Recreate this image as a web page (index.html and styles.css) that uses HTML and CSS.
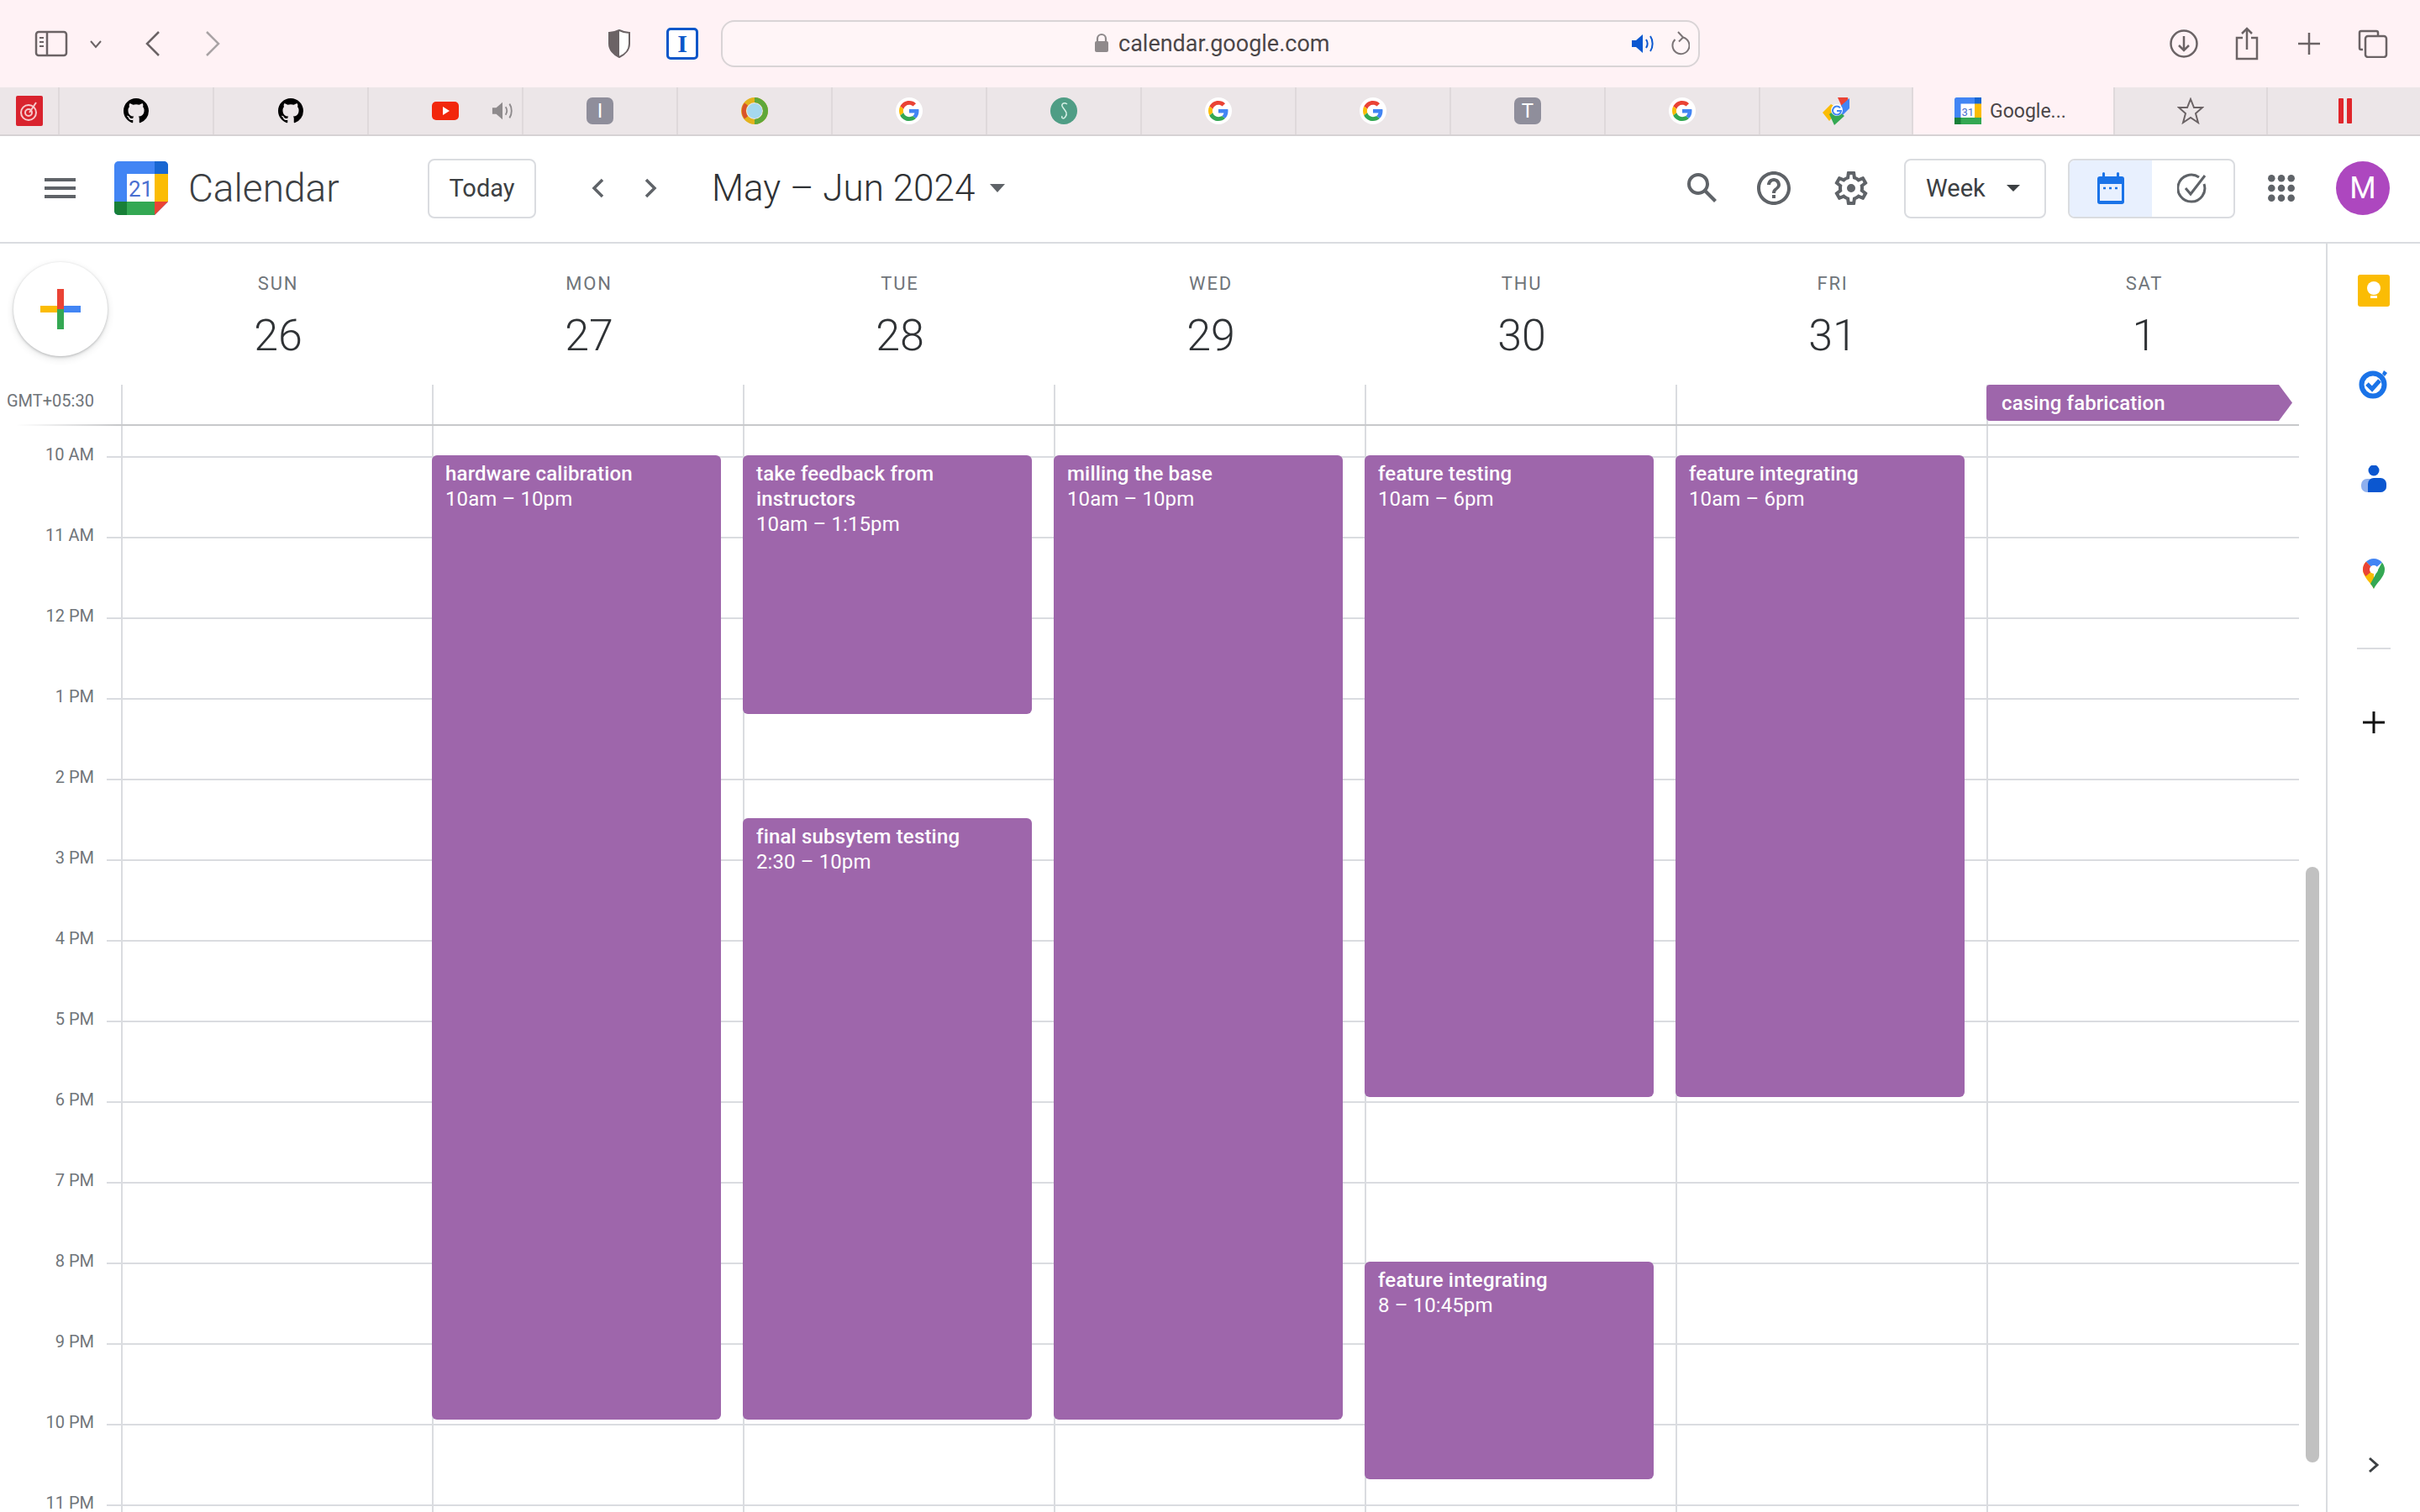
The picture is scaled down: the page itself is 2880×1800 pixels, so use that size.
FILE: index.html
```html
<!DOCTYPE html>
<html>
<head>
  <title>Google Calendar</title>
  <link rel="stylesheet" href="styles.css">
</head>
<body>
  <svg class="defs">
    <symbol id="g" viewBox="-8 -8 64 64">
      <circle cx="24" cy="24" r="32" fill="#fff"/>
      <path fill="#EA4335" d="M24 9.5c3.54 0 6.71 1.22 9.21 3.6l6.85-6.85C35.9 2.38 30.47 0 24 0 14.62 0 6.51 5.38 2.56 13.22l7.98 6.19C12.43 13.72 17.74 9.5 24 9.5z"/>
      <path fill="#4285F4" d="M46.98 24.55c0-1.57-.15-3.09-.38-4.55H24v9.02h12.94c-.58 2.96-2.26 5.48-4.78 7.18l7.73 6c4.51-4.18 7.09-10.36 7.09-17.65z"/>
      <path fill="#FBBC05" d="M10.53 28.59c-.48-1.45-.76-2.99-.76-4.59s.27-3.14.76-4.59l-7.98-6.19C.92 16.46 0 20.12 0 24c0 3.88.92 7.54 2.56 10.78l7.97-6.19z"/>
      <path fill="#34A853" d="M24 48c6.48 0 11.93-2.13 15.89-5.81l-7.73-6c-2.15 1.45-4.92 2.3-8.16 2.3-6.26 0-11.57-4.22-13.47-9.91l-7.98 6.19C6.51 42.62 14.62 48 24 48z"/>
    </symbol>
    <symbol id="github" viewBox="0 0 16 16">
      <path fill-rule="evenodd" fill="#000" d="M8 0C3.58 0 0 3.58 0 8c0 3.54 2.29 6.53 5.47 7.59.4.07.55-.17.55-.38 0-.19-.01-.82-.01-1.49-2.01.37-2.53-.49-2.69-.94-.09-.23-.48-.94-.82-1.13-.28-.15-.68-.52-.01-.53.63-.01 1.08.58 1.23.82.72 1.21 1.87.87 2.33.66.07-.52.28-.87.51-1.07-1.78-.2-3.64-.89-3.64-3.95 0-.87.31-1.59.82-2.15-.08-.2-.36-1.02.08-2.12 0 0 .67-.21 2.2.82.64-.18 1.32-.27 2-.27.68 0 1.36.09 2 .27 1.53-1.04 2.2-.82 2.2-.82.44 1.1.16 1.92.08 2.12.51.56.82 1.27.82 2.15 0 3.07-1.87 3.75-3.65 3.95.29.25.54.73.54 1.48 0 1.07-.01 1.93-.01 2.2 0 .21.15.46.55.38A8.013 8.013 0 0016 8c0-4.42-3.58-8-8-8z"/>
    </symbol>
    <symbol id="speaker" viewBox="0 0 28 28">
      <path d="M1 10h5l8-7v22l-8-7H1z" fill="currentColor"/>
      <path d="M18 9c2 3 2 7 0 10M23 5c3.500 5 3.500 13 0 18" fill="none" stroke="currentColor" stroke-width="2"/>
    </symbol>
  </svg>

  <!-- browser toolbar -->
  <div class="toolbar">
    <svg class="tb-sidebar" width="40" height="32" viewBox="0 0 40 32" fill="none" stroke="#6b6365" stroke-width="2.500">
      <rect x="2" y="2" width="36" height="28" rx="3"/><path d="M15 2v28"/>
      <path d="M6 9h5M6 14h5M6 19h5" stroke-width="2.200"/>
    </svg>
    <svg class="tb-chev" width="14" height="10" viewBox="0 0 14 10" fill="none" stroke="#6b6365" stroke-width="2"><path d="M1 1l6 7 6-7"/></svg>
    <svg class="tb-back" width="20" height="30" viewBox="0 0 20 30" fill="none" stroke="#6b6365" stroke-width="2.500"><path d="M17 1L3 15l14 14"/></svg>
    <svg class="tb-forward" width="20" height="30" viewBox="0 0 20 30" fill="none" stroke="#a9a3a5" stroke-width="2.500"><path d="M3 1l14 14L3 29"/></svg>
    <svg class="tb-shield" width="28" height="34" viewBox="0 0 28 34">
      <path d="M14 1C10 3 6 4 2 4v13c0 7 5 13 12 16 7-3 12-9 12-16V4c-4 0-8-1-12-3z" fill="#fff" stroke="#6b6365" stroke-width="2"/>
      <path d="M14 1C10 3 6 4 2 4v13c0 7 5 13 12 16z" fill="#6b6365"/>
    </svg>
    <div class="tb-ibox">I</div>
    <div class="urlbar">
      <svg class="lock" width="18" height="24" viewBox="0 0 18 24"><path d="M4 10V7a5 5 0 0 1 10 0v3" fill="none" stroke="#8f8a8c" stroke-width="2.200"/><rect x="1" y="10" width="16" height="13" rx="2" fill="#8f8a8c"/></svg>
      <span class="url">calendar.google.com</span>
      <svg class="url-sound" width="28" height="28"><use href="#speaker"/></svg>
      <svg class="url-reload" width="24" height="30" viewBox="0 0 24 30" fill="none" stroke="#7b7476" stroke-width="2"><path d="M16 7.500A10 10 0 1 1 6.500 10"/><path d="M10 1l6 6.500-5 5"/></svg>
    </div>
    <div class="tb-right">
      <svg width="34" height="34" viewBox="0 0 34 34" fill="none" stroke="#6b6365" stroke-width="2.500"><circle cx="17" cy="17" r="15.500"/><path d="M17 8v17M11 19l6 6 6-6"/></svg>
      <svg class="tb-share" width="28" height="40" viewBox="0 0 28 40" fill="none" stroke="#6b6365" stroke-width="2.500"><path d="M9 13H2v25h24V13h-7"/><path d="M14 27V2M8 8l6-6 6 6"/></svg>
      <svg class="tb-plus" width="28" height="28" viewBox="0 0 28 28" fill="none" stroke="#6b6365" stroke-width="2.500"><path d="M14 1v26M1 14h26"/></svg>
      <svg class="tb-tabs" width="36" height="34" viewBox="0 0 36 34" fill="none" stroke="#6b6365" stroke-width="2.500"><path d="M6 24H4a2 2 0 0 1-2-2V4a2 2 0 0 1 2-2h18a2 2 0 0 1 2 2v3"/><rect x="9" y="8" width="25" height="25" rx="3"/></svg>
    </div>
  </div>

  <!-- tab strip -->
  <div class="tabs">
    <div class="tab tab-first">
      <svg width="32" height="36" viewBox="0 0 32 36"><rect width="32" height="36" rx="2" fill="#d9232e"/><g fill="none" stroke="#f6c9cc" stroke-width="2"><circle cx="15" cy="20" r="9"/><circle cx="15" cy="20" r="4"/><path d="M16 20l8-12"/></g></svg>
    </div>
    <div class="tab"><svg width="30" height="30"><use href="#github"/></svg></div>
    <div class="tab"><svg width="30" height="30"><use href="#github"/></svg></div>
    <div class="tab">
      <svg width="32" height="22" viewBox="0 0 32 22"><rect width="32" height="22" rx="5" fill="#f2270c"/><path d="M13 6l8 5-8 5z" fill="#fff"/></svg>
      <svg class="tab-sound" width="28" height="26"><use href="#speaker"/></svg>
    </div>
    <div class="tab"><div class="letter">I</div></div>
    <div class="tab">
      <svg width="32" height="32" viewBox="0 0 32 32"><circle cx="16" cy="16" r="13" fill="none" stroke="#e3b21c" stroke-width="6"/><path d="M16 3a13 13 0 0 1 0 26" fill="none" stroke="#5fa83a" stroke-width="6"/><path d="M6 8a13 13 0 0 0 0 16" fill="none" stroke="#d9532b" stroke-width="5"/><circle cx="16" cy="16" r="9" fill="#a5d8ee"/></svg>
    </div>
    <div class="tab"><svg width="32" height="32"><use href="#g"/></svg></div>
    <div class="tab">
      <svg width="32" height="32" viewBox="0 0 32 32"><circle cx="16" cy="16" r="16" fill="#4f9d85"/><path d="M20 8c-4-3-8 0-5 4s6 7 3 11-5 1-4-1" fill="none" stroke="#d5efe5" stroke-width="1.500"/></svg>
    </div>
    <div class="tab"><svg width="32" height="32"><use href="#g"/></svg></div>
    <div class="tab"><svg width="32" height="32"><use href="#g"/></svg></div>
    <div class="tab"><div class="letter">T</div></div>
    <div class="tab"><svg width="32" height="32"><use href="#g"/></svg></div>
    <div class="tab tab-narrow">
      <svg width="36" height="36" viewBox="0 0 36 36">
        <path d="M20 2l12 0 2 12-6 6-8-18z" fill="#ea4335"/>
        <path d="M34 3l0 12-8 8-8-6z" fill="#4285f4"/>
        <path d="M12 10l10 6-12 14-8-10z" fill="#fbbc05"/>
        <path d="M10 22l8-6 10 8-12 11z" fill="#34a853"/>
        <circle cx="19" cy="17" r="7" fill="#fff"/>
        <path d="M23 14.500a5 5 0 1 0 1 3.500h-5" fill="none" stroke="#4285f4" stroke-width="2"/>
      </svg>
    </div>
    <div class="tab tab-active">
      <svg width="32" height="32" viewBox="0 0 64 64">
        <rect width="64" height="64" rx="5" fill="#4285f4"/>
        <rect x="48" width="16" height="15" fill="#1967d2"/>
        <rect x="48" y="15" width="16" height="33" fill="#fbbc04"/>
        <rect y="48" width="64" height="16" fill="#34a853"/>
        <rect y="48" width="15" height="16" fill="#188038"/>
        <rect x="15" y="15" width="33" height="33" fill="#fff"/>
        <text x="31.500" y="43" class="logo-num">31</text>
      </svg>
      <span class="tab-title">Google...</span>
    </div>
    <div class="tab tab-narrow">
      <svg width="32" height="32" viewBox="0 0 32 32" fill="none" stroke="#6b6365" stroke-width="2"><path d="M16 2l4 10h10l-8 7 3 11-9-6-9 6 3-11-8-7h10z"/></svg>
    </div>
    <div class="tab tab-last">
      <svg width="16" height="30" viewBox="0 0 16 30" fill="#e0262b"><rect width="6" height="30" rx="1"/><rect x="10" width="6" height="30" rx="1"/></svg>
    </div>
  </div>

  <!-- calendar top bar -->
  <header class="topbar">
    <div class="brand">
      <svg class="menu" width="37" height="24" viewBox="0 0 37 24" fill="#5f6368"><rect width="37" height="4"/><rect y="10" width="37" height="4"/><rect y="20" width="37" height="4"/></svg>
      <svg class="logo" width="64" height="64" viewBox="0 0 64 64">
        <path d="M5 0h54a5 5 0 0 1 5 5v43L48 64H5a5 5 0 0 1-5-5V5a5 5 0 0 1 5-5z" fill="#4285f4"/>
        <path d="M48 0h11a5 5 0 0 1 5 5v10H48z" fill="#1967d2"/>
        <rect x="48" y="15" width="16" height="33" fill="#fbbc04"/>
        <path d="M15 48h33v16H15z" fill="#34a853"/>
        <path d="M0 48h15v16H5a5 5 0 0 1-5-5z" fill="#188038"/>
        <path d="M48 48h16L48 64z" fill="#ea4335"/>
        <rect x="15" y="15" width="33" height="33" fill="#fff"/>
        <text x="31.500" y="42" class="logo-num">21</text>
      </svg>
      <span class="product">Calendar</span>
    </div>
    <div class="btn today">Today</div>
    <svg class="nav-prev" width="16" height="24" viewBox="0 0 16 24" fill="none" stroke="#5f6368" stroke-width="3.500"><path d="M14 2L4 12l10 10"/></svg>
    <svg class="nav-next" width="16" height="24" viewBox="0 0 16 24" fill="none" stroke="#5f6368" stroke-width="3.500"><path d="M2 2l10 10L2 22"/></svg>
    <div class="range">May – Jun 2024</div>
    <span class="caret range-caret"></span>

    <div class="top-right">
      <svg width="48" height="48" viewBox="0 0 24 24" fill="#5f6368"><path d="M20.490 19l-5.730-5.730C15.530 12.200 16 10.910 16 9.500A6.500 6.500 0 1 0 9.500 16c1.410 0 2.700-.47 3.770-1.240L19 20.490 20.490 19zM5 9.500C5 7.010 7.010 5 9.500 5S14 7.010 14 9.500 11.990 14 9.500 14 5 11.990 5 9.500z"/></svg>
      <svg class="ic-help" width="48" height="48" viewBox="0 0 24 24" fill="#5f6368"><path d="M11 18h2v-2h-2v2zm1-16C6.480 2 2 6.480 2 12s4.480 10 10 10 10-4.480 10-10S17.520 2 12 2zm0 18c-4.410 0-8-3.590-8-8s3.590-8 8-8 8 3.590 8 8-3.590 8-8 8zm0-14c-2.210 0-4 1.790-4 4h2c0-1.100.9-2 2-2s2 .9 2 2c0 2-3 1.750-3 5h2c0-2.250 3-2.500 3-5 0-2.210-1.790-4-4-4z"/></svg>
      <svg class="ic-gear" width="48" height="48" viewBox="0 0 24 24" fill="#5f6368"><path d="M19.430 12.980c.04-.32.07-.64.07-.98 0-.34-.03-.66-.07-.98l2.110-1.650c.19-.15.24-.42.12-.64l-2-3.460c-.09-.16-.26-.25-.44-.25-.06 0-.12.01-.17.03l-2.490 1c-.52-.4-1.080-.73-1.690-.98l-.38-2.650C14.460 2.180 14.250 2 14 2h-4c-.25 0-.46.18-.49.42l-.38 2.650c-.61.25-1.170.59-1.690.98l-2.490-1c-.06-.02-.12-.03-.18-.03-.17 0-.34.09-.43.25l-2 3.460c-.13.22-.07.49.12.64l2.110 1.650c-.04.32-.07.65-.07.98 0 .33.03.66.07.98l-2.110 1.650c-.19.15-.24.42-.12.64l2 3.460c.09.16.26.25.44.25.06 0 .12-.01.17-.03l2.490-1c.52.4 1.080.73 1.690.98l.38 2.650c.03.24.24.42.49.42h4c.25 0 .46-.18.49-.42l.38-2.650c.61-.25 1.170-.59 1.690-.98l2.490 1c.06.02.12.03.18.03.17 0 .34-.09.43-.25l2-3.460c.12-.22.07-.49-.12-.64l-2.110-1.650zm-1.980-1.710c.04.31.05.52.05.73 0 .21-.02.43-.05.73l-.14 1.130.89.7 1.080.84-.7 1.210-1.270-.51-1.040-.42-.9.68c-.43.32-.84.56-1.250.73l-1.060.43-.16 1.130-.2 1.350h-1.400l-.19-1.350-.16-1.130-1.060-.43c-.43-.18-.83-.41-1.230-.71l-.91-.7-1.060.43-1.270.51-.7-1.210 1.080-.84.89-.7-.14-1.130c-.03-.31-.05-.54-.05-.74s.02-.43.05-.73l.14-1.130-.89-.7-1.080-.84.7-1.210 1.270.51 1.040.42.9-.68c.43-.32.84-.56 1.250-.73l1.060-.43.16-1.130.2-1.350h1.390l.19 1.350.16 1.130 1.060.43c.43.18.83.41 1.230.71l.91.7 1.060-.43 1.270-.51.7 1.210-1.070.85-.89.7.14 1.130zM12 9.500a2.500 2.500 0 1 0 0 5 2.500 2.500 0 0 0 0-5z"/></svg>
      <div class="btn week">Week<span class="caret"></span></div>
      <div class="toggle">
        <div class="toggle-on">
          <svg width="32" height="40" viewBox="0 0 32 40"><path d="M3 6h26a3 3 0 0 1 3 3v27a3 3 0 0 1-3 3H3a3 3 0 0 1-3-3V9a3 3 0 0 1 3-3z" fill="#1a73e8"/><rect x="6" y="1" width="3" height="8" rx="1.500" fill="#1a73e8"/><rect x="23" y="1" width="3" height="8" rx="1.500" fill="#1a73e8"/><rect x="3" y="15" width="26" height="20" fill="#e8f0fe"/><path d="M7 20h3M14 20h3M21 20h3" stroke="#1a73e8" stroke-width="2.500"/></svg>
        </div>
        <div class="toggle-off">
          <svg width="36" height="36" viewBox="0 0 36 36" fill="none" stroke="#5f6368" stroke-width="3"><path d="M32 13a16 16 0 1 1-6-8"/><path d="M10 18l6 7L33 3"/></svg>
        </div>
      </div>
      <svg class="ic-apps" width="34" height="34" viewBox="0 0 32 32" fill="#5f6368">
        <circle cx="5" cy="5" r="4"/><circle cx="16" cy="5" r="4"/><circle cx="27" cy="5" r="4"/>
        <circle cx="5" cy="16" r="4"/><circle cx="16" cy="16" r="4"/><circle cx="27" cy="16" r="4"/>
        <circle cx="5" cy="27" r="4"/><circle cx="16" cy="27" r="4"/><circle cx="27" cy="27" r="4"/>
      </svg>
      <div class="avatar">M</div>
    </div>
  </header>

  <div class="main">
    <div class="cal">
      <!-- day names -->
      <div class="days-head">
        <div class="fab-cell">
          <div class="fab">
            <svg width="48" height="48" viewBox="0 0 48 48">
              <rect y="20" width="24" height="8" fill="#fbbc04"/>
              <rect x="24" y="20" width="24" height="8" fill="#4285f4"/>
              <rect x="20" y="24" width="8" height="24" fill="#34a853"/>
              <rect x="20" width="8" height="24" fill="#ea4335"/>
            </svg>
          </div>
        </div>
        <div class="dh"><div class="dh-name">SUN</div><div class="dh-num">26</div></div>
        <div class="dh"><div class="dh-name">MON</div><div class="dh-num">27</div></div>
        <div class="dh"><div class="dh-name">TUE</div><div class="dh-num">28</div></div>
        <div class="dh"><div class="dh-name">WED</div><div class="dh-num">29</div></div>
        <div class="dh"><div class="dh-name">THU</div><div class="dh-num">30</div></div>
        <div class="dh"><div class="dh-name">FRI</div><div class="dh-num">31</div></div>
        <div class="dh"><div class="dh-name">SAT</div><div class="dh-num">1</div></div>
      </div>

      <!-- all day row -->
      <div class="allday">
        <div class="tz">GMT+05:30</div>
        <div class="ad-cell"></div>
        <div class="ad-cell"></div>
        <div class="ad-cell"></div>
        <div class="ad-cell"></div>
        <div class="ad-cell"></div>
        <div class="ad-cell"></div>
        <div class="ad-cell"><div class="ad-event">casing fabrication</div></div>
      </div>

      <!-- time grid -->
      <div class="body">
        <div class="grid">
          <div class="gutter">
            <div class="slot"><span class="slot-label">10 AM</span><i class="tick"></i></div>
            <div class="slot"><span class="slot-label">11 AM</span><i class="tick"></i></div>
            <div class="slot"><span class="slot-label">12 PM</span><i class="tick"></i></div>
            <div class="slot"><span class="slot-label">1 PM</span><i class="tick"></i></div>
            <div class="slot"><span class="slot-label">2 PM</span><i class="tick"></i></div>
            <div class="slot"><span class="slot-label">3 PM</span><i class="tick"></i></div>
            <div class="slot"><span class="slot-label">4 PM</span><i class="tick"></i></div>
            <div class="slot"><span class="slot-label">5 PM</span><i class="tick"></i></div>
            <div class="slot"><span class="slot-label">6 PM</span><i class="tick"></i></div>
            <div class="slot"><span class="slot-label">7 PM</span><i class="tick"></i></div>
            <div class="slot"><span class="slot-label">8 PM</span><i class="tick"></i></div>
            <div class="slot"><span class="slot-label">9 PM</span><i class="tick"></i></div>
            <div class="slot"><span class="slot-label">10 PM</span><i class="tick"></i></div>
            <div class="slot"><span class="slot-label">11 PM</span><i class="tick"></i></div>
          </div>
          <div class="day"></div>
          <div class="day">
            <div class="event" style="top:35px;height:1148px"><b>hardware calibration</b><span>10am – 10pm</span></div>
          </div>
          <div class="day">
            <div class="event" style="top:35px;height:308px"><b>take feedback from instructors</b><span>10am – 1:15pm</span></div>
            <div class="event" style="top:467px;height:716px"><b>final subsytem testing</b><span>2:30 – 10pm</span></div>
          </div>
          <div class="day">
            <div class="event" style="top:35px;height:1148px"><b>milling the base</b><span>10am – 10pm</span></div>
          </div>
          <div class="day">
            <div class="event" style="top:35px;height:764px"><b>feature testing</b><span>10am – 6pm</span></div>
            <div class="event" style="top:995px;height:259px"><b>feature integrating</b><span>8 – 10:45pm</span></div>
          </div>
          <div class="day">
            <div class="event" style="top:35px;height:764px"><b>feature integrating</b><span>10am – 6pm</span></div>
          </div>
          <div class="day"></div>
        </div>
        <div class="scroll"><div class="thumb"></div></div>
      </div>
    </div>

    <!-- side panel -->
    <aside class="side">
      <svg class="s-keep" width="38" height="38" viewBox="0 0 38 38"><rect width="38" height="38" rx="3" fill="#fbbc04"/><circle cx="19" cy="16" r="8" fill="#fff"/><rect x="15" y="25" width="8" height="3" fill="#fff"/></svg>
      <svg class="s-tasks" width="36" height="36" viewBox="0 0 36 36" fill="none"><circle cx="17" cy="19" r="13.500" stroke="#1a73e8" stroke-width="6"/><path d="M10 18l6 6 9-10" stroke="#1a73e8" stroke-width="5"/><path d="M30 2l4 3-3 4-3-3z" fill="#1a73e8"/></svg>
      <svg class="s-people" width="30" height="32" viewBox="0 0 30 32"><rect y="16" width="30" height="16" rx="7" fill="#8fb0ee"/><circle cx="15" cy="6" r="6.500" fill="#0b57d0"/><path d="M8 32V22a7 7 0 0 1 7-7h8a7 7 0 0 1 7 7v3a7 7 0 0 1-7 7z" fill="#0b57d0"/></svg>
      <svg class="s-maps" width="26" height="36" viewBox="0 0 26 36">
        <path d="M13 36C9 28 0 22 0 13c0-3.500 1.400-6.800 3.800-9.200L13 13z" fill="#fbbc04"/>
        <path d="M3.800 3.800A13 13 0 0 1 13 0c3.900 0 7.400 1.700 9.800 4.500L13 13z" fill="#4285f4"/>
        <path d="M22.800 4.500A13 13 0 0 1 26 13c0 9-9 15-13 23-1-2-2-4-4-6z" fill="#34a853"/>
        <path d="M3.800 3.800L13 13l-9.500 8C1.400 18.500 0 16 0 13c0-3.500 1.400-6.800 3.800-9.200z" fill="#ea4335"/>
        <circle cx="13" cy="13" r="5" fill="#fff"/>
      </svg>
      <div class="s-rule"></div>
      <svg class="s-plus" width="28" height="28" viewBox="0 0 28 28" fill="none" stroke="#111" stroke-width="3"><path d="M14 1v26M1 14h26"/></svg>
      <svg class="s-chev" width="14" height="20" viewBox="0 0 14 20" fill="none" stroke="#3c4043" stroke-width="3"><path d="M2 2l9 8-9 8"/></svg>
    </aside>
  </div>
</body>
</html>
```
FILE: styles.css
```css
* {
  box-sizing: border-box;
}
html, body {
  margin: 0;
  height: 1800px;
  overflow: hidden;
}
body {
  font-family: Roboto, "Liberation Sans", sans-serif;
  background: #fff;
  color: #3c4043;
}
svg {
  display: block;
  flex: none;
}
.defs {
  position: absolute;
  width: 0;
  height: 0;
}
.logo-num {
  font-family: Roboto, sans-serif;
  font-size: 26px;
  fill: #4a6fd0;
  text-anchor: middle;
}

/* browser toolbar */
.toolbar {
  height: 104px;
  background: #fff2f5;
  display: flex;
  align-items: center;
  padding: 0 38px 0 41px;
}
.tb-chev { margin-left: 26px; margin-top: 2px; }
.tb-back { margin-left: 51px; }
.tb-forward { margin-left: 51px; }
.tb-shield { margin-left: 460px; }
.tb-ibox {
  margin-left: 42px;
  width: 38px;
  height: 38px;
  border: 3px solid #0b57c9;
  border-radius: 5px;
  background: #fff;
  color: #0b57c9;
  font: 700 30px/32px "Liberation Serif", serif;
  text-align: center;
}
.urlbar {
  margin-left: 27px;
  width: 1165px;
  height: 56px;
  border: 2px solid #d9d4d6;
  border-radius: 16px;
  background: #fff5f7;
  display: flex;
  align-items: center;
  padding: 0 10px 0 442px;
}
.lock { margin-bottom: 2px; }
.url {
  margin-left: 11px;
  font-size: 27px;
  color: #4b4648;
}
.url-sound {
  margin-left: auto;
  color: #0b57d0;
}
.url-reload { margin-left: 18px; }
.tb-right {
  margin-left: auto;
  display: flex;
  align-items: center;
}
.tb-share { margin-left: 44px; }
.tb-plus { margin-left: 46px; }
.tb-tabs { margin-left: 44px; }

/* tab strip */
.tabs {
  height: 58px;
  background: #ece6e8;
  border-bottom: 2px solid #d6d2d4;
  display: flex;
}
.tab {
  width: 184px;
  border-right: 2px solid #dfd9db;
  display: flex;
  align-items: center;
  justify-content: center;
  position: relative;
}
.tab-first { width: 71px; }
.tab-narrow { width: 182px; }
.tab-last { flex: 1; border-right: 0; padding-right: 0; justify-content: flex-start; padding-left: 84px; }
.tab-active {
  width: 240px;
  background: #fff2f5;
  justify-content: flex-start;
  padding-left: 49px;
  border-right: 2px solid #dfd9db;
}
.tab-title {
  margin-left: 10px;
  font-size: 23px;
  color: #4b4648;
}
.tab-sound {
  position: absolute;
  left: 145px;
  top: 15px;
  color: #8e8a8c;
}
.letter {
  width: 32px;
  height: 32px;
  border-radius: 7px;
  background: #8f8e9b;
  color: #fff;
  font-size: 24px;
  line-height: 32px;
  text-align: center;
}

/* calendar top bar */
.topbar {
  height: 128px;
  border-bottom: 2px solid #dadce0;
  display: flex;
  align-items: center;
  padding: 0 36px 2px 53px;
}
.brand {
  width: 456px;
  display: flex;
  align-items: center;
}
.logo { margin-left: 46px; }
.product {
  margin-left: 24px;
  font-size: 46px;
  font-weight: 300;
  color: #3c4043;
}
.btn {
  height: 71px;
  border: 2px solid #dadce0;
  border-radius: 8px;
  font-size: 29px;
  color: #3c4043;
  display: flex;
  align-items: center;
}
.today {
  width: 129px;
  justify-content: center;
}
.nav-prev { margin-left: 65px; }
.nav-next { margin-left: 48px; }
.range {
  margin-left: 64px;
  font-size: 44px;
  font-weight: 300;
  color: #2f3235;
}
.caret {
  width: 0;
  height: 0;
  border: 9px solid transparent;
  border-top: 10px solid #5f6368;
  border-bottom: 0;
}
.range-caret { margin-left: 18px; }
.top-right {
  margin-left: auto;
  display: flex;
  align-items: center;
}
.ic-help { margin-left: 37px; }
.ic-gear { margin-left: 44px; }
.week {
  margin-left: 39px;
  width: 169px;
  padding-left: 24px;
}
.week .caret {
  margin-left: 25px;
  border-width: 8px;
  border-top-color: #3c4043;
  border-top-width: 8px;
  border-bottom: 0;
}
.toggle {
  margin-left: 26px;
  width: 199px;
  height: 71px;
  border: 2px solid #dadce0;
  border-radius: 8px;
  display: flex;
  overflow: hidden;
}
.toggle-on, .toggle-off {
  flex: 1;
  display: flex;
  align-items: center;
  justify-content: center;
}
.toggle-on { background: #e8f0fe; }
.ic-apps { margin-left: 38px; }
.avatar {
  margin-left: 48px;
  width: 64px;
  height: 64px;
  border-radius: 50%;
  background: #ad47bf;
  color: #fff;
  font-size: 36px;
  line-height: 64px;
  text-align: center;
}

/* main area */
.main {
  display: flex;
  height: 1510px;
}
.cal {
  width: 2768px;
  overflow: hidden;
}
.days-head, .allday, .grid {
  display: grid;
  grid-template-columns: 144px repeat(6, 370px) 1fr;
  width: 2736px;
}
.days-head { height: 168px; }
.fab-cell { padding: 22px 0 0 16px; }
.fab {
  width: 112px;
  height: 112px;
  border-radius: 50%;
  background: #fff;
  box-shadow: 0 1px 3px rgba(60,64,67,.3), 0 3px 8px rgba(60,64,67,.15);
  display: flex;
  align-items: center;
  justify-content: center;
}
.dh {
  text-align: center;
  padding: 34px 0 0 4px;
}
.dh-name {
  font-size: 22px;
  line-height: 28px;
  letter-spacing: 1.800px;
  color: #70757a;
}
.dh-num {
  margin-top: 17px;
  font-size: 52px;
  line-height: 62px;
  font-weight: 300;
  color: #2f3235;
}

.allday {
  height: 49px;
  border-bottom: 2px solid;
  border-image: linear-gradient(90deg, #fff 20px, #c8c9cb 140px) 1;
}
.tz {
  font-size: 20px;
  line-height: 24px;
  padding: 7px 0 0 8px;
  color: #70757a;
  white-space: nowrap;
}
.ad-cell { border-left: 2px solid #dadce0; }
.ad-event {
  width: 364px;
  height: 43px;
  margin-left: -2px;
  padding-left: 18px;
  background: #9e66ab;
  color: #fff;
  font-size: 24px;
  font-weight: 500;
  line-height: 45px;
  letter-spacing: .1px;
  border-radius: 4px 0 0 4px;
  clip-path: polygon(0 0, 348px 0, 100% 50%, 348px 100%, 0 100%);
}

.body {
  display: flex;
  height: 1293px;
}
.grid { height: 1293px; }
.gutter { padding-top: 36px; }
.slot {
  height: 96px;
  display: flex;
  justify-content: flex-end;
}
.slot-label {
  margin: -12px 15px 0 0;
  height: 20px;
  font-size: 20px;
  line-height: 20px;
  color: #70757a;
}
.tick {
  width: 17px;
  height: 2px;
  background: #dadce0;
}
.day {
  position: relative;
  border-left: 2px solid #dadce0;
  background: linear-gradient(#dadce0 2px, transparent 2px) 0 36px / 100% 96px;
}
.event {
  position: absolute;
  left: -2px;
  width: 344px;
  padding: 7px 16px;
  background: #9e66ab;
  color: #fff;
  border-radius: 6px;
  font-size: 24px;
  line-height: 30px;
}
.event b {
  display: block;
  font-weight: 500;
  letter-spacing: .18px;
}
.event span { display: block; letter-spacing: .1px; }

.scroll {
  width: 32px;
  padding: 525px 0 0 8px;
}
.thumb {
  width: 16px;
  height: 709px;
  border-radius: 8px;
  background: #c1c1c1;
}

/* side panel */
.side {
  width: 112px;
  border-left: 2px solid #dadce0;
  display: flex;
  flex-direction: column;
  align-items: center;
  padding: 37px 0 46px;
}
.s-tasks { margin-top: 74px; }
.s-people { margin-top: 79px; }
.s-maps { margin-top: 79px; }
.s-rule {
  width: 40px;
  height: 2px;
  background: #dadce0;
  margin-top: 70px;
}
.s-plus { margin-top: 73px; }
.s-chev { margin-top: auto; }
```
